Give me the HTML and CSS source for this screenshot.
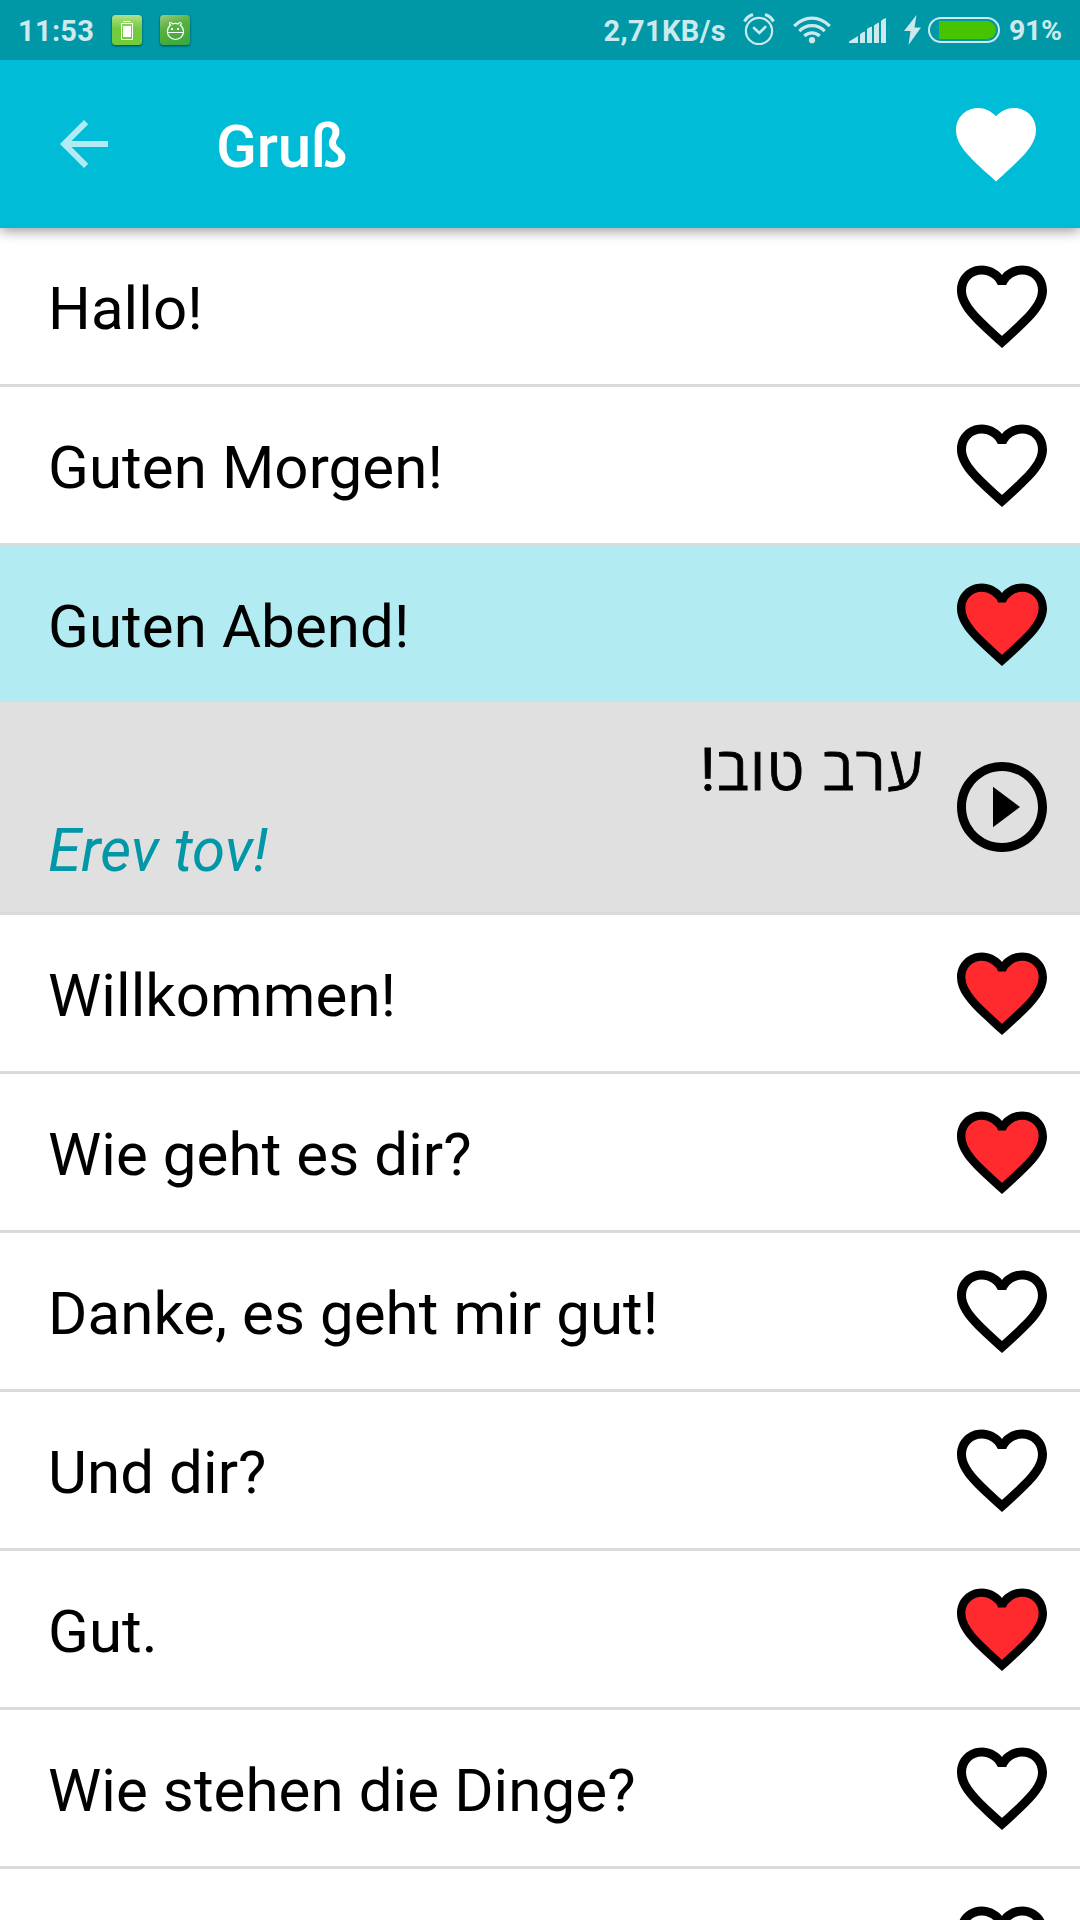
FILE: index.html
```html
<!DOCTYPE html>
<html lang="de">
<head>
<meta charset="utf-8">
<title>Gruß</title>
<link rel="stylesheet" href="styles.css">
</head>
<body>
<svg class="defs" aria-hidden="true">
  <defs>
    <path id="heart" d="M12 21.35l-1.45-1.32C5.4 15.36 2 12.28 2 8.5 2 5.42 4.42 3 7.5 3c1.74 0 3.41.81 4.5 2.09C13.09 3.81 14.76 3 16.5 3 19.58 3 22 5.42 22 8.5c0 3.78-3.4 6.86-8.55 11.54L12 21.35z"/>
    <path id="heart-inner" d="M12.1 18.55l-.1.1-.1-.1C7.14 14.24 4 11.39 4 8.5 4 6.5 5.5 5 7.5 5c1.54 0 3.04.99 3.57 2.36h1.87C13.46 5.99 14.96 5 16.5 5c2 0 3.5 1.5 3.5 3.5 0 2.89-3.14 5.74-7.9 10.05z"/>
    <linearGradient id="lime" x1="0" y1="0" x2="0" y2="1"><stop offset="0" stop-color="#b0df8c"/><stop offset=".45" stop-color="#72cc40"/><stop offset="1" stop-color="#70cc3a"/></linearGradient>
    <linearGradient id="green" x1="0" y1="0" x2=".4" y2="1"><stop offset="0" stop-color="#9dcb85"/><stop offset=".45" stop-color="#58b240"/><stop offset="1" stop-color="#3fa93f"/></linearGradient>
  </defs>
</svg>
<div class="screen">
  <div class="status">
    <span class="clock">11:53</span>
    <svg class="app-icon" viewBox="0 0 30 30">
      <rect width="30" height="30" rx="3.5" fill="url(#lime)"/>
      <path d="M11.5 6.500h7" stroke="#fff"/>
      <rect x="9.500" y="8.500" width="11" height="16" fill="none" stroke="#fff"/>
      <rect x="11" y="11" width="8" height="11" fill="#fff"/>
    </svg>
    <svg class="app-icon" viewBox="0 0 30 30">
      <rect width="30" height="30" rx="3.5" fill="url(#green)"/>
      <path d="M10.500 10.200C9 8.800 9.300 7.400 10.500 7.500c1 0 1.600.8 2 1.400 1.800-.6 3.800-.6 5.500 0 .5-.8 1.200-1.500 2.200-1.400 1.300.1 1.300 1.700.2 2.700 2.100 1.600 3.100 3.800 3.100 6.300 0 4.500-3.500 8-8 8s-8.100-3.500-8.100-8c0-2.500 1-4.800 3.100-6.300zM7.500 17.500h16" fill="none" stroke="#fff" stroke-width="1.200"/>
      <path d="M11 13h2v2h-2zM17 13h2v2h-2z" fill="#fff"/>
    </svg>
    <span class="speed">2,71KB/s</span>
    <svg class="alarm" viewBox="0 0 32 32" fill="none" stroke="#cceaed">
      <circle cx="16" cy="18" r="13.100" stroke-width="2.200"/>
      <path d="M11 15l5.300 5 6-6" stroke-width="2.600" stroke-linecap="round"/>
      <path d="M1.500 8.500Q4 3.500 10 1.500M30.500 8.500Q28 3.500 22 1.500" stroke-width="3"/>
    </svg>
    <svg class="wifi" viewBox="0 0 38 28" fill="none" stroke="#cceaed" stroke-width="3.200">
      <path d="M1.200 10.200C11.500-.6 26.500-.6 36.800 10.200M6.300 15.100c7.200-7.300 18.200-7.300 25.400 0M11.300 20c4.500-4.200 10.900-4.200 15.400 0"/>
      <circle cx="19" cy="24.200" r="3.100" fill="#cceaed" stroke="none"/>
    </svg>
    <svg class="signal" viewBox="0 0 37 25" fill="#cceaed">
      <path d="M0 25v-1.500L9 18v7zM11 25v-8.500q2-2.500 5-3V25zM18 25V11q2-2 5-2.500V25zM25 25V7.500q2-2 5-3V25zM32 25V3q2-2.500 5-3V25z"/>
    </svg>
    <svg class="bolt" viewBox="0 0 17 30" fill="#cceaed"><path d="M12.500 0L0 16h6.500L4.500 30 17 12.500h-6.500z"/></svg>
    <svg class="battery" viewBox="0 0 72 26">
      <rect x="1" y="1" width="70" height="24" rx="12" fill="none" stroke="#cceaed" stroke-width="2"/>
      <path d="M11 4h48a9 9 0 0 1 0 18H11z" fill="#47c400"/>
    </svg>
    <span class="percent">91%</span>
  </div>

  <header class="bar">
    <svg class="back" viewBox="0 0 24 24"><path d="M20 11H7.830l5.590-5.590L12 4l-8 8 8 8 1.410-1.410L7.830 13H20v-2z"/></svg>
    <h1 class="title">Gruß</h1>
    <svg class="bar-heart" viewBox="0 0 24 24"><use href="#heart"/></svg>
  </header>

  <main class="list">
    <div class="row"><span class="phrase">Hallo!</span><svg class="fav" viewBox="0 0 24 24"><use href="#heart"/><use href="#heart-inner" class="inner"/></svg></div>
    <div class="row"><span class="phrase">Guten Morgen!</span><svg class="fav" viewBox="0 0 24 24"><use href="#heart"/><use href="#heart-inner" class="inner"/></svg></div>
    <div class="row open on"><span class="phrase">Guten Abend!</span><svg class="fav" viewBox="0 0 24 24"><use href="#heart"/><use href="#heart-inner" class="inner"/></svg></div>
    <div class="detail">
      <div class="texts">
        <span class="hebrew" lang="he" dir="rtl">ערב טוב!</span>
        <span class="latin">Erev tov!</span>
      </div>
      <svg class="play" viewBox="0 0 24 24"><path d="M10 16.500l6-4.500-6-4.500v9zM12 2C6.480 2 2 6.480 2 12s4.480 10 10 10 10-4.480 10-10S17.520 2 12 2zm0 18c-4.410 0-8-3.590-8-8s3.590-8 8-8 8 3.590 8 8-3.590 8-8 8z"/></svg>
    </div>
    <div class="row on"><span class="phrase">Willkommen!</span><svg class="fav" viewBox="0 0 24 24"><use href="#heart"/><use href="#heart-inner" class="inner"/></svg></div>
    <div class="row on"><span class="phrase">Wie geht es dir?</span><svg class="fav" viewBox="0 0 24 24"><use href="#heart"/><use href="#heart-inner" class="inner"/></svg></div>
    <div class="row"><span class="phrase">Danke, es geht mir gut!</span><svg class="fav" viewBox="0 0 24 24"><use href="#heart"/><use href="#heart-inner" class="inner"/></svg></div>
    <div class="row"><span class="phrase">Und dir?</span><svg class="fav" viewBox="0 0 24 24"><use href="#heart"/><use href="#heart-inner" class="inner"/></svg></div>
    <div class="row on"><span class="phrase">Gut.</span><svg class="fav" viewBox="0 0 24 24"><use href="#heart"/><use href="#heart-inner" class="inner"/></svg></div>
    <div class="row"><span class="phrase">Wie stehen die Dinge?</span><svg class="fav" viewBox="0 0 24 24"><use href="#heart"/><use href="#heart-inner" class="inner"/></svg></div>
    <div class="row"><span class="phrase"></span><svg class="fav" viewBox="0 0 24 24"><use href="#heart"/><use href="#heart-inner" class="inner"/></svg></div>
  </main>
</div>
</body>
</html>
```
FILE: styles.css
```css
* { box-sizing: border-box; }
body { margin: 0; background: #fff; font-family: Roboto, "Open Sans", sans-serif; color: #000; }
svg { display: block; flex: none; }
.defs { position: absolute; width: 0; height: 0; }
.screen { width: 1080px; height: 1920px; overflow: hidden; display: flex; flex-direction: column; }

.status {
  flex: none; position: relative; z-index: 2;
  height: 60px; padding: 0 18px; background: #0097a7; color: #cceaed;
  display: flex; align-items: center; font-size: 29px; font-weight: 700; white-space: nowrap;
}
.clock { width: 94px; padding-top: 2px; letter-spacing: .3px; }
.app-icon { width: 30px; height: 30px; margin-right: 18px; filter: drop-shadow(0 1px 1px rgba(0, 0, 0, .5)); }
.speed { margin-left: auto; padding-top: 2px; letter-spacing: .35px; }
.alarm { width: 32px; height: 32px; margin: -2px 0 0 17px; }
.wifi { width: 38px; height: 28px; margin-left: 18px; }
.signal { width: 37px; height: 25px; margin: 1px 0 0 18px; }
.bolt { width: 17px; height: 30px; margin-left: 18px; }
.battery { width: 72px; height: 26px; margin-left: 7px; }
.percent { width: 53px; margin-left: 9px; padding-top: 1px; font-size: 28.5px; letter-spacing: -.3px; }

.bar {
  flex: none; position: relative; height: 168px; padding: 0 36px 0 48px; background: #00bcd7;
  display: flex; align-items: center; box-shadow: 0 3px 12px rgba(0, 0, 0, .4);
}
.back { width: 72px; height: 72px; fill: #b2ebf3; }
.title { flex: 1; margin: 0 0 0 96px; padding-top: 5px; font-size: 60px; font-weight: 500; letter-spacing: -.2px; color: #fff; }
.bar-heart { width: 96px; height: 96px; fill: #fff; }

.row {
  height: 159px; padding: 0 24px 0 48px; border-bottom: 3px solid #dadada;
  display: flex; align-items: center; justify-content: space-between;
}
.phrase { padding-top: 5px; font-size: 60px; letter-spacing: .08px; white-space: nowrap; }
.fav, .play { width: 108px; height: 108px; }
.inner { fill: #fff; }
.on .inner { fill: #ff2a2e; stroke: #ff2a2e; stroke-width: .3; }
.open { height: 156px; border-bottom: 0; background: #b2ebf2; }

.detail {
  height: 213px; padding: 0 24px 0 48px; background: #e0e0e0; border-bottom: 3px solid #dadada;
  display: flex; align-items: center;
}
.texts { flex: 1; margin-right: 24px; padding-top: 6px; display: flex; flex-direction: column; font-size: 60px; line-height: 81px; }
.hebrew { height: 81px; letter-spacing: 1.6px; -webkit-text-stroke: .8px #000; }
.latin { height: 81px; font-style: italic; color: #0097a7; }
```
